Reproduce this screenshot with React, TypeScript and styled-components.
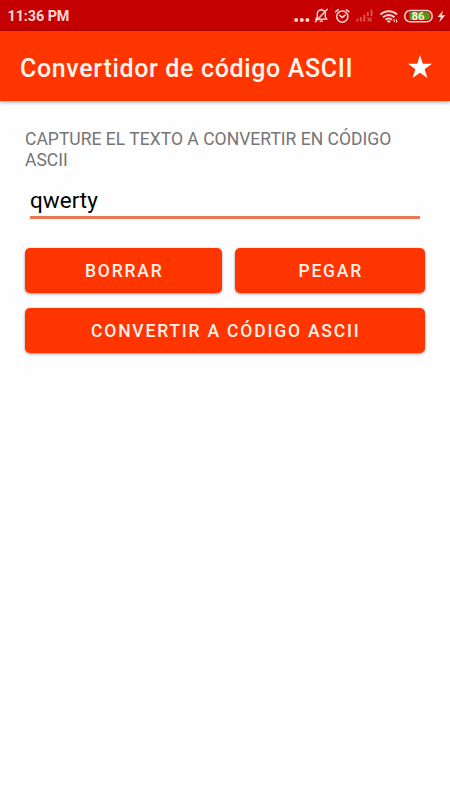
import React, { useState } from "react";
import styled, { createGlobalStyle } from "styled-components";

const GlobalStyle = createGlobalStyle`
  *, *::before, *::after { box-sizing: border-box; }
  html, body { margin: 0; padding: 0; background: #fefefe; }
  body, input, button { font-family: Roboto, "Liberation Sans", sans-serif; }
`;

const Screen = styled.div`
  width: 450px;
  height: 800px;
  display: flex;
  flex-direction: column;
  background: #fefefe;
  overflow: hidden;
`;

const StatusBar = styled.header`
  height: 31px;
  flex: none;
  padding: 1px 4px 0 7.5px;
  display: flex;
  align-items: center;
  justify-content: space-between;
  background: #c40000;
  color: #ffd9d4;
`;

const Clock = styled.span`
  padding-top: 2px;
  font-size: 14.4px;
  font-weight: 700;
  line-height: 30px;
  letter-spacing: -0.08px;
`;

const StatusIcons = styled.div`
  display: flex;
  align-items: center;
  svg { display: block; flex: none; }
`;

const AppBar = styled.div`
  height: 70px;
  flex: none;
  padding: 3px 18px 0 20px;
  display: flex;
  align-items: center;
  justify-content: space-between;
  background: #ff3500;
  box-shadow: 0 1px 4px rgba(0, 0, 0, 0.4);
`;

const Title = styled.h1`
  margin: 0;
  padding-top: 2px;
  color: #fff4ee;
  font-size: 25px;
  font-weight: 500;
  line-height: 32px;
  letter-spacing: 0.65px;
  white-space: nowrap;
`;

const IconButton = styled.button`
  width: 24px;
  height: 24px;
  margin-top: -2px;
  padding: 0;
  border: 0;
  background: none;
  svg { display: block; }
`;

const Form = styled.main`
  padding: 28px 25px 0;
  display: flex;
  flex-direction: column;
`;

const Label = styled.label`
  color: #757575;
  font-size: 17.5px;
  line-height: 20.5px;
  letter-spacing: 0.02px;
`;

const TextField = styled.input`
  height: 34px;
  margin: 15px 5px 0;
  padding: 0 0 1px;
  border: 0;
  border-bottom: 3px solid #e87a53;
  border-radius: 0;
  outline: none;
  background: transparent;
  color: #000;
  font-size: 22.5px;
  line-height: 27px;
`;

const Actions = styled.div`
  margin-top: 28.5px;
  display: grid;
  grid-template-columns: 197px 190px;
  gap: 15px 13px;
`;

const Button = styled.button<{ $wide?: boolean }>`
  grid-column: ${({ $wide }) => ($wide ? "1 / -1" : "auto")};
  height: 45px;
  padding: 2px 0 0 1.5px;
  border: 0;
  border-radius: 5px;
  background: #ff3500;
  color: #fff0ea;
  font-size: 17.5px;
  font-weight: 500;
  line-height: 21px;
  letter-spacing: 1.8px;
  box-shadow: 0 1px 3px rgba(0, 0, 0, 0.42);
`;

const StatusGlyphs = () => (
  <svg width="156" height="30" viewBox="290 0 156 30" fill="none" stroke="#ffd6d0">
    <g fill="#ffd6d0" stroke="none">
      <circle cx="296.2" cy="19" r="2" />
      <circle cx="301.8" cy="19" r="2" />
      <circle cx="307.4" cy="19" r="2" />
    </g>
    <g strokeWidth="1.4" strokeLinecap="round" strokeLinejoin="round">
      <path d="M315.8 18.2h11L325.3 16v-3c0-2.4-1.6-4-4-4s-4 1.6-4 4v3ZM321.3 8.8v-.5M320.2 20.3h2.2" />
      <path d="M315.4 20.8 327.3 8.2" />
    </g>
    <g strokeWidth="1.5" strokeLinecap="round">
      <circle cx="342.3" cy="15.6" r="5.6" />
      <path d="M339.7 14.2 342.2 16.5l2.9-2.4M335.7 10.7l2.7-2M348.9 10.7l-2.7-2" />
    </g>
    <g stroke="#ed7770" strokeWidth="2" opacity="0.68">
      <path d="M357.3 20.5v-2.7M360.8 20.5v-4.5M364.3 20.5v-6.7M367.8 15v-3.9M371.5 15V8.5" />
      <path d="m367.4 16.6 4.2 3.9m0-3.9-4.2 3.9" strokeWidth="1.4" />
    </g>
    <g strokeWidth="1.9">
      <path d="M380.4 13.6c4.6-4.5 12.1-4.5 16.7 0M383 16.3c3.3-3.1 8.3-3.1 11.5 0M385.6 18.8c1.8-1.7 4.5-1.7 6.3 0" />
    </g>
    <path d="m386.8 19.9 2 2.1 2-2.1c-1-1-3-1-4 0Z" fill="#ffd6d0" stroke="none" />
    <path d="M394.3 18.3v3m-1-1.9 1-1.1M396.5 18.3v3m1-1.1-1 1.1" strokeWidth="1" />
    <rect x="404.8" y="9.6" width="27.3" height="11.2" rx="5.2" strokeWidth="1.5" />
    <path d="M409.5 11.3h17.2c2.4 0 3.5 1.6 3.5 3.9s-1.2 3.9-3.5 3.9h-17.2Z" fill="#519a18" stroke="none" />
    <text x="417.9" y="19.2" textAnchor="middle" fill="#fff1df" stroke="none" fontFamily="Roboto, sans-serif" fontSize="11.3" fontWeight="700">86</text>
    <path d="m443 9.4-5.3 6.5h3.2l-1.7 5.3 6.1-7h-3.5Z" fill="#ffe3de" stroke="none" />
  </svg>
);

const Star = () => (
  <svg width="24" height="24" viewBox="0 0 24 24" fill="#fff">
    <path d="m12 0 2.82 8.8H24l-7.4 5.4 2.9 8.9L12 17.7l-7.5 5.4 2.9-8.9L0 8.8h9.18Z" />
  </svg>
);

export default function App() {
  const [text, setText] = useState("qwerty");
  return (
    <>
      <GlobalStyle />
      <Screen>
        <StatusBar>
          <Clock>11:36 PM</Clock>
          <StatusIcons><StatusGlyphs /></StatusIcons>
        </StatusBar>
        <AppBar>
          <Title>Convertidor de código ASCII</Title>
          <IconButton aria-label="Favorito"><Star /></IconButton>
        </AppBar>
        <Form>
          <Label htmlFor="source">CAPTURE EL TEXTO A CONVERTIR EN CÓDIGO ASCII</Label>
          <TextField id="source" value={text} spellCheck={false} onChange={(e) => setText(e.target.value)} />
          <Actions>
            <Button onClick={() => setText("")}>BORRAR</Button>
            <Button>PEGAR</Button>
            <Button $wide>CONVERTIR A CÓDIGO ASCII</Button>
          </Actions>
        </Form>
      </Screen>
    </>
  );
}
